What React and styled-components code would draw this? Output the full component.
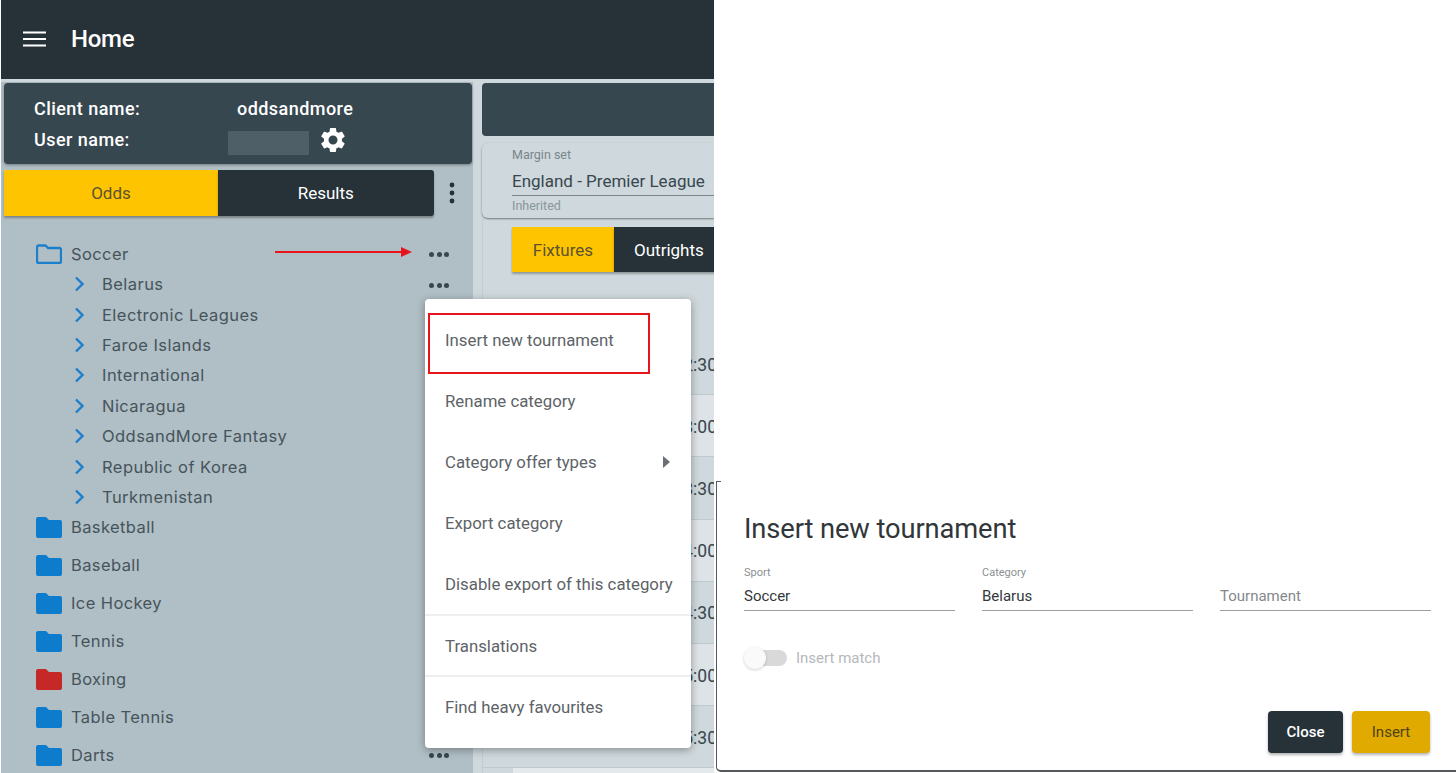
import React from "react";
import styled, { createGlobalStyle } from "styled-components";

const Global = createGlobalStyle`
  html, body { margin: 0; padding: 0; background: #fff; overflow: hidden; }
  * { box-sizing: border-box; }
  body { font-family: "Open Sans", "Liberation Sans", sans-serif; }
`;

const Page = styled.div`
  display: flex;
  width: 1456px;
  height: 773px;
  overflow: hidden;
  background: #fff;
`;
const LeftShot = styled.div`
  position: relative;
  width: 714px;
  height: 773px;
  flex: none;
  overflow: hidden;
  padding-left: 1px;
  display: flex;
  flex-direction: column;
  background: #fff;
`;
const AppBar = styled.header`
  height: 79px;
  flex: none;
  background: #263238;
  display: flex;
  align-items: center;
  gap: 25px;
  padding: 0 0 2px 22px;
  color: #fff;
  font: 500 24px/28px Roboto, sans-serif;
  letter-spacing: -0.3px;
`;
const Workspace = styled.div`
  flex: 1;
  min-height: 0;
  display: flex;
  background: #cfd8dc;
  border-top: 3px solid #cfd8dc;
`;
const Sidebar = styled.aside`
  width: 472px;
  flex: none;
  background: #b0bec5;
  display: flex;
  flex-direction: column;
  padding: 1px 1px 0 3px;
`;
const InfoCard = styled.div`
  height: 81px;
  flex: none;
  background: #37474f;
  border-radius: 4px;
  box-shadow: 0 1px 3px rgba(0,0,0,.35);
  color: #fff;
  padding: 11px 0 0 30px;
  display: grid;
  grid-template-columns: 203px auto;
  grid-auto-rows: 30.5px;
  justify-content: start;
  align-items: center;
  font: 500 18px/22px Roboto, sans-serif;
  letter-spacing: 0.45px;
`;
const NameRow = styled.div`
  display: flex;
  align-items: center;
  gap: 9px;
  margin-left: -9px;
  height: 30px;
`;
const Redacted = styled.span`
  width: 81px;
  height: 24px;
  margin-top: 7px;
  background: #4f5f67;
`;
const TabRow = styled.div`
  height: 46px;
  margin-top: 6px;
  flex: none;
  display: flex;
  align-items: center;
`;
const Tab = styled.div`
  width: ${p => p.$w}px;
  height: ${p => p.$h || 46}px;
  flex: none;
  display: flex;
  align-items: center;
  justify-content: ${p => (p.$flush ? "flex-start" : "center")};
  padding-left: ${p => (p.$flush ? "20px" : "0")};
  background: ${p => (p.$active ? "#ffc400" : "#263238")};
  color: ${p => (p.$active ? "#5b5330" : "#fff")};
  font: 400 17px/20px Roboto, sans-serif;
  box-shadow: 0 2px 2px rgba(0,0,0,.3);
  border-radius: ${p => p.$radius || "0"};
`;
const KebabWrap = styled.div`
  width: 36px;
  display: flex;
  justify-content: center;
  color: #263238;
`;
const Tree = styled.div`
  flex: 1;
  display: flex;
  flex-direction: column;
  padding: 22px 0 0 32px;
  color: #46545b;
  font: 400 16.5px/22px Inter, sans-serif;
`;
const SportRow = styled.div`
  height: ${p => p.$h || 38}px;
  flex: none;
  display: flex;
  align-items: center;
  gap: 9px;
  letter-spacing: .4px;
`;
const CategoryRow = styled.div`
  height: 30.4px;
  flex: none;
  display: flex;
  align-items: center;
  padding-left: 38px;
  gap: 17px;
  letter-spacing: .45px;
`;
const SportList = styled.div`
  display: flex;
  flex-direction: column;
  margin-top: -4px;
`;
const Dots = styled.div`
  position: absolute;
  left: 429px;
  top: ${p => p.$top}px;
  display: flex;
  gap: 2.5px;
  & i { width: 5px; height: 5px; background: #37474f; border-radius: 50%; display: block; }
`;
const Arrow = styled.svg`
  position: absolute;
  left: 275px;
  top: 245px;
`;
const Main = styled.main`
  flex: 1;
  min-width: 0;
  margin-left: 9px;
  padding-top: 1px;
  display: flex;
  flex-direction: column;
`;
const Banner = styled.div`
  height: 53px;
  flex: none;
  background: #37474f;
  border-radius: 4px 0 0 4px;
`;
const MarginBox = styled.div`
  height: 75px;
  margin-top: 7px;
  flex: none;
  background: #cfd8dc;
  border-radius: 6px 0 0 6px;
  box-shadow: 0 1px 2px rgba(0,0,0,.45);
  padding: 4px 0 0 30px;
  display: flex;
  flex-direction: column;
  font-family: Roboto, sans-serif;
  color: #78868c;
`;
const TinyLabel = styled.span`
  font-size: 12.5px;
  line-height: 16px;
  margin-top: ${p => p.$gap || 0}px;
  opacity: ${p => (p.$faint ? 0.8 : 1)};
`;
const SelectValue = styled.div`
  font-size: 17px;
  line-height: 25px;
  color: #37474f;
  border-bottom: 1px solid #79868c;
  height: 33px;
  padding-top: 5.5px;
`;
const Panel = styled.div`
  flex: 1;
  min-height: 0;
  display: flex;
  flex-direction: column;
  border-left: 1px solid #c3ced3;
`;
const TopTabs = styled.div`
  display: flex;
  margin: 9px 0 0 29px;
`;
const FixtureRows = styled.div`
  display: flex;
  flex-direction: column;
  margin: 61px -3px 0 0;
`;
const FixtureRow = styled.div`
  height: 62.2px;
  flex: none;
  display: flex;
  align-items: center;
  justify-content: flex-end;
  padding-top: 2px;
  font: 400 17.5px Roboto, sans-serif;
  color: #37474f;
  background: ${p => (p.$odd ? "#dde3e6" : "#cfd8dc")};
  border-bottom: 1px solid #bfcad0;
  white-space: nowrap;
`;
const TableFoot = styled.div`
  height: 6px;
  flex: none;
  margin-left: 30px;
  background: #e4e9eb;
`;
const Menu = styled.div`
  position: absolute;
  left: 425px;
  top: 299px;
  width: 266px;
  height: 449px;
  background: #fff;
  border-radius: 4px;
  box-shadow: 0 2px 8px rgba(0,0,0,.35);
  display: flex;
  flex-direction: column;
  padding-top: 10px;
`;
const MenuItem = styled.div`
  height: 61.2px;
  padding: 0 20px;
  display: flex;
  align-items: center;
  justify-content: space-between;
  flex: none;
  font: 400 16.8px/20px Roboto, sans-serif;
  color: #5d6367;
  border-top: ${p => (p.$divider ? "2px solid #eee" : "none")};
  white-space: nowrap;
  &:nth-child(6) { margin-top: -1px; }
`;
const Highlight = styled.div`
  position: absolute;
  left: 428px;
  top: 313px;
  width: 222px;
  height: 61px;
  border: 2px solid #e8141c;
`;
const RightShot = styled.div`
  flex: 1;
  min-width: 0;
  display: flex;
  flex-direction: column;
  justify-content: flex-end;
  padding: 0 0 1px 2px;
`;
const Dialog = styled.section`
  position: relative;
  height: 291px;
  min-width: 0;
  background: #fff;
  border-left: 1px solid #54595c;
  border-bottom: 2px solid #54595c;
  border-radius: 0 0 0 5px;
  padding: 31px 26px 0 27px;
  display: flex;
  flex-direction: column;
  font-family: Roboto, sans-serif;
  &::before {
    content: "";
    position: absolute;
    left: 0;
    top: 0;
    width: 4px;
    height: 1px;
    background: #54595c;
  }
`;
const DialogTitle = styled.h2`
  margin: 0;
  font: 400 27.3px/34px Roboto, sans-serif;
  color: #30363a;
  letter-spacing: -0.1px;
`;
const Fields = styled.div`
  display: grid;
  grid-template-columns: repeat(3, 210.5px);
  column-gap: 27.5px;
  margin-top: 17px;
`;
const Field = styled.div`
  height: 48px;
  border-bottom: 1px solid #9aa0a3;
  display: flex;
  flex-direction: column;
  justify-content: flex-end;
  padding-bottom: 4px;
`;
const FieldLabel = styled.span`
  font-size: 11px;
  line-height: 14px;
  color: #8a8f92;
  margin-bottom: 7px;
`;
const FieldValue = styled.span`
  font-size: 15px;
  line-height: 19px;
  color: ${p => (p.$muted ? "#85898c" : "#33383b")};
`;
const SwitchRow = styled.div`
  display: flex;
  align-items: center;
  gap: 9px;
  margin-top: 38px;
  font-size: 15px;
  color: #b5b8ba;
`;
const SwitchTrack = styled.div`
  width: 42px;
  height: 16px;
  position: relative;
  margin-left: 1px;
  border-radius: 8px;
  background: #d9d9d9;
  & > i {
    position: absolute;
    left: -1px;
    top: -3px;
    width: 22px;
    height: 22px;
    border-radius: 50%;
    background: #fafafa;
    box-shadow: 0 1px 3px rgba(0,0,0,.18);
  }
`;
const Actions = styled.div`
  display: flex;
  justify-content: flex-end;
  gap: 9px;
  margin-top: 44px;
`;
const Button = styled.button`
  height: 42px;
  width: ${p => p.$w}px;
  border: 0;
  border-radius: 4px;
  background: ${p => (p.$primary ? "#e0aa00" : "#263238")};
  color: ${p => (p.$primary ? "#4d4218" : "#fff")};
  box-shadow: 0 2px 3px rgba(0,0,0,.3);
  font: ${p => (p.$primary ? 400 : 500)} 15px Roboto, sans-serif;
`;

const OpenFolder = () => (
  <svg width="26" height="20" viewBox="0 0 26 20">
    <path d="M2.5 1.5h7l2.5 2.5h11.5a1.5 1.5 0 0 1 1.5 1.5v12a1.5 1.5 0 0 1-1.5 1.5h-21a1.5 1.5 0 0 1-1.5-1.5V3a1.5 1.5 0 0 1 1.5-1.5z" fill="none" stroke="#1b7fcc" strokeWidth="2.3" />
  </svg>
);
const Folder = ({ color }) => (
  <svg width="26" height="21" viewBox="0 0 26 21">
    <path d="M2 0h8l3 3h11a2 2 0 0 1 2 2v14a2 2 0 0 1-2 2H2a2 2 0 0 1-2-2V2a2 2 0 0 1 2-2z" fill={color} />
  </svg>
);
const Chevron = () => (
  <svg width="11" height="16" viewBox="0 0 11 16">
    <path d="M2 1.5 8.5 8 2 14.5" fill="none" stroke="#1b7fcc" strokeWidth="2.4" />
  </svg>
);
const Burger = () => (
  <svg width="23" height="16" viewBox="0 0 23 16">
    <path d="M0 1.5h23M0 8h23M0 14.5h23" stroke="#fff" strokeWidth="2.2" />
  </svg>
);
const Gear = () => (
  <svg width="30" height="30" viewBox="0 0 24 24" fill="#fff">
    <path d="M19.14 12.94c.04-.3.06-.61.06-.94s-.02-.64-.07-.94l2.03-1.58a.5.5 0 0 0 .12-.64l-1.92-3.32a.5.5 0 0 0-.61-.22l-2.39.96a7 7 0 0 0-1.62-.94l-.36-2.54a.48.48 0 0 0-.48-.41h-3.84a.48.48 0 0 0-.47.41l-.36 2.54c-.59.24-1.13.57-1.62.94l-2.39-.96a.49.49 0 0 0-.61.22L2.69 8.84a.49.49 0 0 0 .12.64l2.03 1.58c-.05.3-.09.63-.09.94s.02.64.07.94l-2.03 1.58a.5.5 0 0 0-.12.64l1.92 3.32c.12.22.37.29.59.22l2.39-.96c.5.38 1.03.7 1.62.94l.36 2.54c.05.24.24.41.48.41h3.84c.24 0 .44-.17.47-.41l.36-2.54c.59-.24 1.13-.56 1.62-.94l2.39.96c.22.08.47 0 .59-.22l1.92-3.32a.5.5 0 0 0-.12-.64l-2.01-1.58zM12 15.6A3.6 3.6 0 1 1 12 8.4a3.6 3.6 0 0 1 0 7.2z" />
  </svg>
);
const Kebab = () => (
  <svg width="6" height="22" viewBox="0 0 6 22" fill="currentColor">
    <circle cx="3" cy="3" r="2.4" /><circle cx="3" cy="11" r="2.4" /><circle cx="3" cy="19" r="2.4" />
  </svg>
);
const SubmenuCaret = () => (
  <svg width="8" height="12" viewBox="0 0 8 12"><path d="M0 0l7 6-7 6z" fill="#6a7073" /></svg>
);
const ThreeDots = ({ top }) => (
  <Dots $top={top}><i /><i /><i /></Dots>
);

const categories = ["Belarus", "Electronic Leagues", "Faroe Islands", "International", "Nicaragua", "OddsandMore Fantasy", "Republic of Korea", "Turkmenistan"];
const sports = [["Basketball", "#0d7ccd"], ["Baseball", "#0d7ccd"], ["Ice Hockey", "#0d7ccd"], ["Tennis", "#0d7ccd"], ["Boxing", "#c62828"], ["Table Tennis", "#0d7ccd"], ["Darts", "#0d7ccd"]];
const menuItems = ["Insert new tournament", "Rename category", "Category offer types", "Export category", "Disable export of this category", "Translations", "Find heavy favourites"];
const times = ["2:30", "8:00", "8:30", "4:00", "4:30", "5:00", "5:30"];

export default function App() {
  return (
    <Page>
      <Global />
      <LeftShot>
        <AppBar><Burger /><span>Home</span></AppBar>
        <Workspace>
          <Sidebar>
            <InfoCard>
              <span>Client name:</span><span>oddsandmore</span>
              <span>User name:</span>
              <NameRow><Redacted /><Gear /></NameRow>
            </InfoCard>
            <TabRow>
              <Tab $w={214} $active>Odds</Tab>
              <Tab $w={215.5} $radius="0 3px 3px 0">Results</Tab>
              <KebabWrap><Kebab /></KebabWrap>
            </TabRow>
            <Tree>
              <SportRow $h={31}><OpenFolder /><span>Soccer</span></SportRow>
              {categories.map(c => (
                <CategoryRow key={c}><Chevron /><span>{c}</span></CategoryRow>
              ))}
              <SportList>
                {sports.map(([s, col]) => (
                  <SportRow key={s}><Folder color={col} /><span>{s}</span></SportRow>
                ))}
              </SportList>
            </Tree>
          </Sidebar>
          <Main>
            <Banner />
            <MarginBox>
              <TinyLabel>Margin set</TinyLabel>
              <SelectValue>England - Premier League</SelectValue>
              <TinyLabel $gap={2} $faint>Inherited</TinyLabel>
            </MarginBox>
            <Panel>
              <TopTabs>
                <Tab $w={102} $h={45} $active>Fixtures</Tab>
                <Tab $w={110} $h={45} $flush>Outrights</Tab>
              </TopTabs>
              <FixtureRows>
                {times.map((t, i) => (
                  <FixtureRow key={t} $odd={i % 2 === 1}>{t}</FixtureRow>
                ))}
              </FixtureRows>
              <TableFoot />
            </Panel>
          </Main>
        </Workspace>
        <ThreeDots top={252} />
        <ThreeDots top={283} />
        <ThreeDots top={752.5} />
        <Arrow width="140" height="14" viewBox="0 0 140 14">
          <path d="M0 7h128" stroke="#e8141c" strokeWidth="2" />
          <path d="M126 2l11 5-11 5z" fill="#e8141c" />
        </Arrow>
        <Menu>
          {menuItems.map((m, i) => (
            <MenuItem key={m} $divider={i >= 5}>
              <span>{m}</span>
              {i === 2 && <SubmenuCaret />}
            </MenuItem>
          ))}
        </Menu>
        <Highlight />
      </LeftShot>
      <RightShot>
        <Dialog>
          <DialogTitle>Insert new tournament</DialogTitle>
          <Fields>
            <Field><FieldLabel>Sport</FieldLabel><FieldValue>Soccer</FieldValue></Field>
            <Field><FieldLabel>Category</FieldLabel><FieldValue>Belarus</FieldValue></Field>
            <Field><FieldValue $muted>Tournament</FieldValue></Field>
          </Fields>
          <SwitchRow><SwitchTrack><i /></SwitchTrack><span>Insert match</span></SwitchRow>
          <Actions>
            <Button $w={75}>Close</Button>
            <Button $w={78} $primary>Insert</Button>
          </Actions>
        </Dialog>
      </RightShot>
    </Page>
  );
}
